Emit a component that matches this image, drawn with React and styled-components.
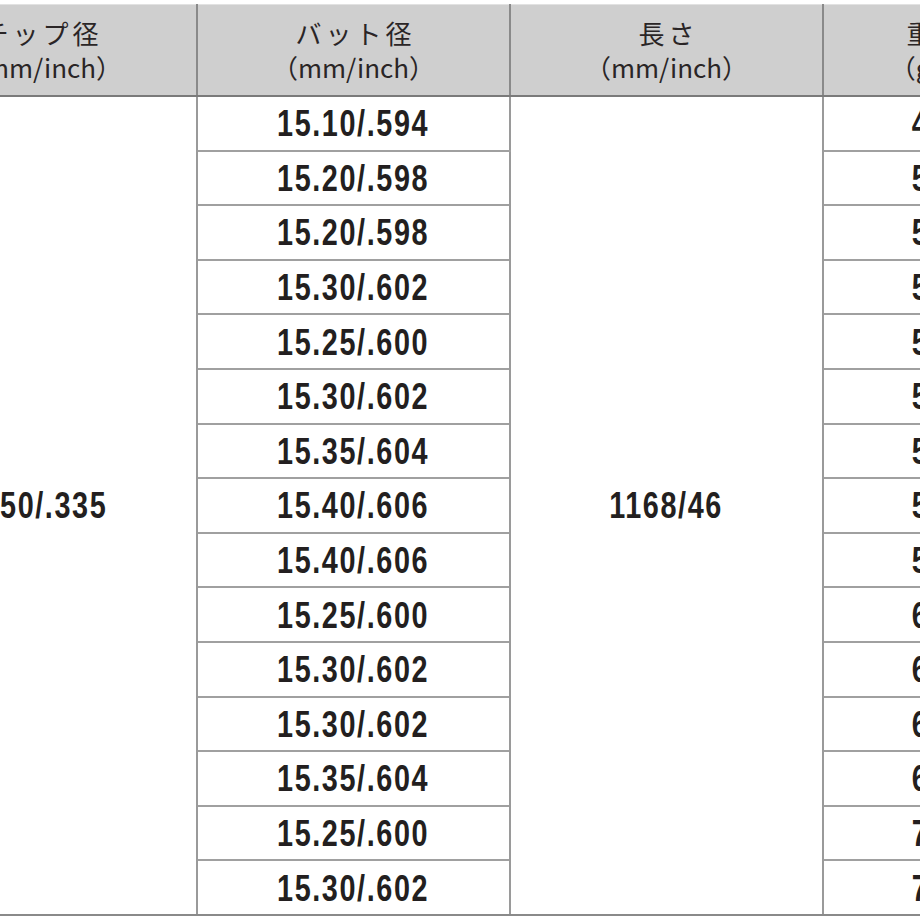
import styled, { createGlobalStyle } from 'styled-components';

const GlobalStyle = createGlobalStyle`
  html, body {
    margin: 0;
    padding: 0;
    background: #ffffff;
  }
`;

const Frame = styled.div`
  width: 920px;
  height: 920px;
  overflow: hidden;
  padding-top: 4px;
  box-sizing: border-box;
`;

const SpecTable = styled.table`
  margin-left: -117px;
  border-collapse: collapse;
  table-layout: fixed;
  width: 1252px;
  border-top: 1px solid #e2e2e2;
`;

const HeadCell = styled.th`
  width: 311px;
  height: 90px;
  padding: 0;
  background: #cfcfcf;
  border-left: 2px solid #8a8a8a;
  border-right: 2px solid #8a8a8a;
  border-bottom: 2px solid #7a7a7a;
  color: #2a2526;
  font-family: "Noto Sans CJK JP", "Noto Sans", sans-serif;
  font-weight: 400;
  font-size: 26px;
  line-height: 34px;
  text-align: center;
  vertical-align: middle;
`;

const Title = styled.div`
  letter-spacing: 4px;
  padding-left: 4px;
`;

const Unit = styled.div`
  letter-spacing: 0;
`;

const Cell = styled.td`
  height: 52.6px;
  padding: 0;
  border: 2px solid #9a9a9a;
  border-top: none;
  border-bottom: ${(p) => (p.$last ? '2px solid #8a8a8a' : '2px solid #a0a0a0')};
  text-align: center;
  vertical-align: middle;
  background: #ffffff;
`;

const Num = styled.span`
  display: inline-block;
  padding-top: 2px;
  color: #231f20;
  font-family: "Liberation Sans", Arial, sans-serif;
  font-weight: 700;
  font-size: 36px;
  line-height: 40px;
  letter-spacing: 2px;
  transform: scaleX(0.8);
  transform-origin: center;
`;

const heads = [
  { title: 'チップ径', unit: '（mm/inch）' },
  { title: 'バット径', unit: '（mm/inch）' },
  { title: '長さ', unit: '（mm/inch）' },
  { title: '重量・重心', unit: '（g/oz・mm）' },
];

const rows = [
  { butt: '15.10/.594', weight: '48.0/1.69' },
  { butt: '15.20/.598', weight: '50.5/1.78' },
  { butt: '15.20/.598', weight: '52.0/1.83' },
  { butt: '15.30/.602', weight: '53.5/1.89' },
  { butt: '15.25/.600', weight: '55.0/1.94' },
  { butt: '15.30/.602', weight: '56.5/1.99' },
  { butt: '15.35/.604', weight: '57.5/2.03' },
  { butt: '15.40/.606', weight: '58.5/2.06' },
  { butt: '15.40/.606', weight: '59.5/2.10' },
  { butt: '15.25/.600', weight: '61.0/2.15' },
  { butt: '15.30/.602', weight: '62.5/2.20' },
  { butt: '15.30/.602', weight: '64.0/2.26' },
  { butt: '15.35/.604', weight: '66.0/2.33' },
  { butt: '15.25/.600', weight: '70.5/2.49' },
  { butt: '15.30/.602', weight: '72.0/2.54' },
];

function App() {
  return (
    <Frame>
      <GlobalStyle />
      <SpecTable>
        <thead>
          <tr>
            {heads.map((h) => (
              <HeadCell key={h.title}>
                <Title>{h.title}</Title>
                <Unit>{h.unit}</Unit>
              </HeadCell>
            ))}
          </tr>
        </thead>
        <tbody>
          {rows.map((r, i) => (
            <tr key={i}>
              {i === 0 && (
                <Cell rowSpan={rows.length} $last>
                  <Num>8.50/.335</Num>
                </Cell>
              )}
              <Cell $last={i === rows.length - 1}>
                <Num>{r.butt}</Num>
              </Cell>
              {i === 0 && (
                <Cell rowSpan={rows.length} $last>
                  <Num>1168/46</Num>
                </Cell>
              )}
              <Cell $last={i === rows.length - 1}>
                <Num>{r.weight}</Num>
              </Cell>
            </tr>
          ))}
        </tbody>
      </SpecTable>
    </Frame>
  );
}

export default App;
